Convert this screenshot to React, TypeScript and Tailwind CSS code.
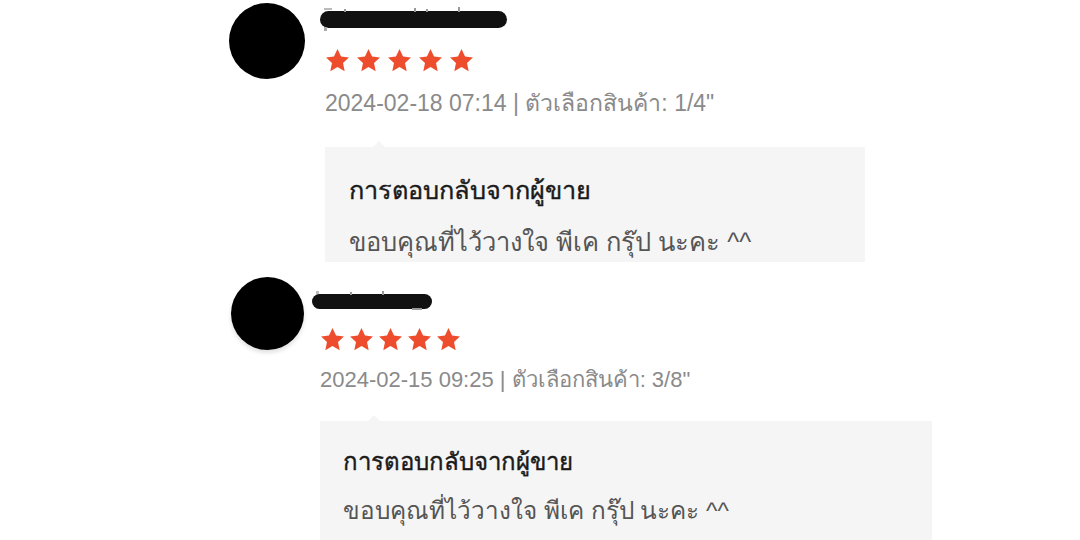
import React from "react";

const Star: React.FC = () => (
  <svg width="25" height="25" viewBox="0 0 24 24">
    <polygon
      points="12,1 15.4,8.2 23,9.1 17.3,14.4 18.9,22.2 12,18.3 5.1,22.2 6.7,14.4 1,9.1 8.6,8.2"
      fill="#ee4d2d"
    />
  </svg>
);

const Stars: React.FC<{ gap: string }> = ({ gap }) => (
  <div className={`flex ${gap}`}>
    <Star />
    <Star />
    <Star />
    <Star />
    <Star />
  </div>
);

const font = { fontFamily: '"Liberation Sans", Tahoma, "Noto Sans", sans-serif' };

const App: React.FC = () => {
  return (
    <div className="w-[1080px] h-[540px] bg-white overflow-hidden" style={font}>
      {/* review 1 */}
      <div className="flex pl-[229px] pt-[3px]">
        <div className="w-[76px] h-[76px] rounded-full bg-black shrink-0" />
        <div className="ml-[20px] flex flex-col">
          <div className="relative -ml-[5px] mt-[8px] w-[187px] h-[17px] rounded-full bg-[#111]">
            <span className="absolute left-[4px] -top-[3px] w-[8px] h-[2px] bg-[#bbb]" />
            <span className="absolute left-[24px] -top-[2px] w-[2px] h-[3px] bg-[#999]" />
            <span className="absolute left-[94px] -top-[3px] w-[2px] h-[4px] bg-[#999]" />
            <span className="absolute left-[106px] -top-[2px] w-[2px] h-[3px] bg-[#999]" />
            <span className="absolute left-[138px] -top-[4px] w-[2px] h-[5px] bg-[#999]" />
            <span className="absolute left-[4px] top-[16px] w-[3px] h-[4px] bg-[#aaa]" />
          </div>
          <div className="mt-[20px]">
            <Stars gap="gap-[6px]" />
          </div>
          <div className="mt-[15px] text-[23px] leading-[30px] text-[#8a8a8a] whitespace-nowrap">
            2024-02-18 07:14 | ตัวเลือกสินค้า: 1/4"
          </div>
          <div className="relative mt-[29px] w-[540px] bg-[#f5f5f5] pl-[24px] pt-[28px] pb-[5px]">
            <span className="absolute left-[48px] -top-[6px] w-0 h-0 border-x-[6px] border-x-transparent border-b-[6px] border-b-[#f5f5f5]" />
            <div className="text-[25.3px] leading-[30px] text-[#1a1a1a] [-webkit-text-stroke:0.4px_#1a1a1a]">
              การตอบกลับจากผู้ขาย
            </div>
            <div className="mt-[22px] text-[25.5px] leading-[30px] text-[#555]">
              ขอบคุณที่ไว้วางใจ พีเค กรุ๊ป นะคะ ^^
            </div>
          </div>
        </div>
      </div>

      {/* review 2 */}
      <div className="flex pl-[231px] pt-[15px]">
        <div className="w-[73px] h-[73px] rounded-full bg-black shrink-0 shadow-[0_3px_4px_rgba(0,0,0,0.12)]" />
        <div className="ml-[16px] flex flex-col">
          <div className="relative -ml-[8px] mt-[17px] w-[120px] h-[15px] rounded-full bg-[#111]">
            <span className="absolute left-[4px] -top-[3px] w-[3px] h-[3px] bg-[#bbb]" />
            <span className="absolute left-[38px] -top-[2px] w-[2px] h-[3px] bg-[#999]" />
            <span className="absolute left-[70px] -top-[3px] w-[2px] h-[4px] bg-[#999]" />
            <span className="absolute left-[100px] top-[14px] w-[10px] h-[2px] bg-[#999]" />
          </div>
          <div className="mt-[18px]">
            <Stars gap="gap-[4px]" />
          </div>
          <div className="mt-[13px] text-[22px] leading-[30px] text-[#8a8a8a] whitespace-nowrap">
            2024-02-15 09:25 | ตัวเลือกสินค้า: 3/8"
          </div>
          <div className="relative mt-[26px] w-[612px] h-[200px] bg-[#f5f5f5] pl-[23px] pt-[26px]">
            <span className="absolute left-[48px] -top-[6px] w-0 h-0 border-x-[6px] border-x-transparent border-b-[6px] border-b-[#f5f5f5]" />
            <div className="text-[24px] leading-[30px] text-[#1a1a1a] [-webkit-text-stroke:0.4px_#1a1a1a]">
              การตอบกลับจากผู้ขาย
            </div>
            <div className="mt-[19px] text-[24.3px] leading-[30px] text-[#555]">
              ขอบคุณที่ไว้วางใจ พีเค กรุ๊ป นะคะ ^^
            </div>
          </div>
        </div>
      </div>
    </div>
  );
};

export default App;
